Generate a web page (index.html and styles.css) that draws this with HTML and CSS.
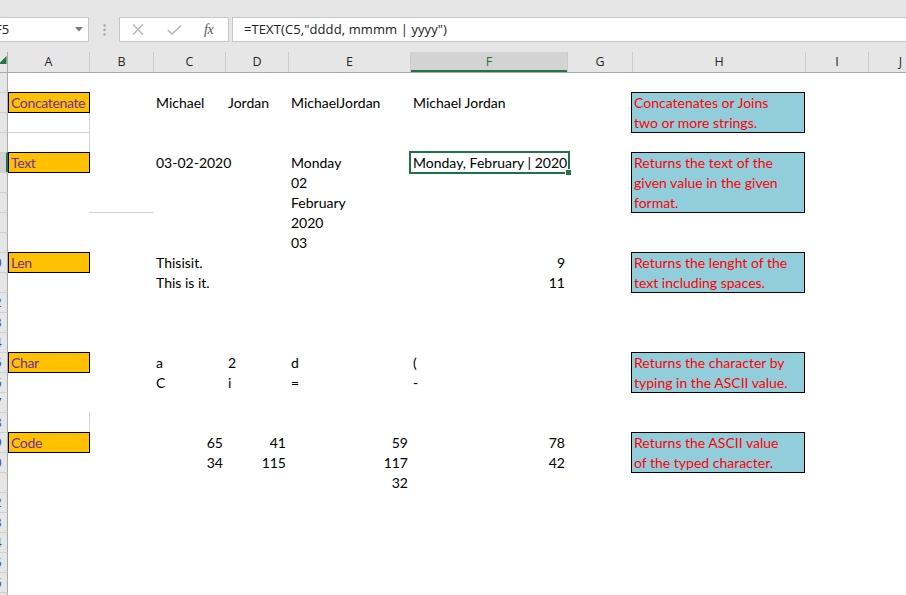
FILE: index.html
```html
<!DOCTYPE html>
<html>
<head>
<meta charset="utf-8">
<link rel="stylesheet" href="styles.css">
</head>
<body>
<div class="topbar">
  <div class="namebox"><span class="namebox-text">F5</span><svg class="dd" width="8" height="5" viewBox="0 0 8 5"><polygon points="0,0 8,0 4,4.5" fill="#7a7a7a"/></svg></div>
  <svg class="grip" width="3" height="12" viewBox="0 0 3 12"><rect x="0.5" y="0.5" width="2" height="2" fill="#9a9a9a"/><rect x="0.5" y="5" width="2" height="2" fill="#9a9a9a"/><rect x="0.5" y="9.5" width="2" height="2" fill="#9a9a9a"/></svg>
  <div class="fxbtns">
    <svg class="ico-x" width="12" height="11" viewBox="0 0 12 11"><path d="M1 0.5 L11 10.5 M11 0.5 L1 10.5" stroke="#b4b4b4" stroke-width="1.3" fill="none"/></svg>
    <svg class="ico-ok" width="15" height="10" viewBox="0 0 15 10"><path d="M0.8 5 L5 9 L14.2 0.6" stroke="#b4b4b4" stroke-width="1.4" fill="none"/></svg>
    <span class="fx">fx</span>
  </div>
  <div class="formula">=TEXT(C5,"dddd, mmmm | yyyy")</div>
</div>

<div class="sheet">
  <div class="corner"><svg width="7" height="20" viewBox="0 0 7 20"><polygon points="6.5,4 6.5,12 -1.5,12" fill="#217346"/></svg></div>
  <div class="ch cA first">A</div>
  <div class="ch cB">B</div>
  <div class="ch cC">C</div>
  <div class="ch cD">D</div>
  <div class="ch cE">E</div>
  <div class="ch cF chsel">F</div>
  <div class="ch cG">G</div>
  <div class="ch cH">H</div>
  <div class="ch cI">I</div>
  <div class="ch cJ">J</div>

  <div class="rh r1"><div class="rn">1</div></div>
  <div class="rh r2"><div class="rn">2</div></div>
  <div class="rh r3"><div class="rn">3</div></div>
  <div class="rh r4"><div class="rn">4</div></div>
  <div class="rh r5 rhsel"><div class="rn">5</div></div>
  <div class="rh r6"><div class="rn">6</div></div>
  <div class="rh r7"><div class="rn">7</div></div>
  <div class="rh r8"><div class="rn">8</div></div>
  <div class="rh r9"><div class="rn">9</div></div>
  <div class="rh r10"><div class="rn">10</div></div>
  <div class="rh r11"><div class="rn">11</div></div>
  <div class="rh r12"><div class="rn">12</div></div>
  <div class="rh r13"><div class="rn">13</div></div>
  <div class="rh r14"><div class="rn">14</div></div>
  <div class="rh r15"><div class="rn">15</div></div>
  <div class="rh r16"><div class="rn">16</div></div>
  <div class="rh r17"><div class="rn">17</div></div>
  <div class="rh r18"><div class="rn">18</div></div>
  <div class="rh r19"><div class="rn">19</div></div>
  <div class="rh r20"><div class="rn">20</div></div>
  <div class="rh r21"><div class="rn">21</div></div>
  <div class="rh r22"><div class="rn">22</div></div>
  <div class="rh r23"><div class="rn">23</div></div>
  <div class="rh r24"><div class="rn">24</div></div>
  <div class="rh r25"><div class="rn">25</div></div>
  <div class="rh r26"><div class="rn">26</div></div>
  <div class="rh r27"><div class="rn">27</div></div>

  <!-- light cell borders -->
  <div class="cA r3 bx-a3"></div>
  <div class="cA r4 bx-a4"></div>
  <div class="cB r8 bx-b8"></div>
  <div class="cA r18 bx-a18"></div>

  <!-- Concatenate -->
  <div class="tag cA r2">Concatenate</div>
  <div class="cell cC r2">Michael</div>
  <div class="cell cD r2">Jordan</div>
  <div class="cell cE r2">MichaelJordan</div>
  <div class="cell cF r2">Michael Jordan</div>
  <div class="desc cH r2 span2">Concatenates or Joins<br>two or more strings.</div>

  <!-- Text -->
  <div class="tag cA r5">Text</div>
  <div class="cell cC r5">03-02-2020</div>
  <div class="cell cE r5">Monday</div>
  <div class="cell cE r6">02</div>
  <div class="cell cE r7">February</div>
  <div class="cell cE r8">2020</div>
  <div class="cell cE r9">03</div>
  <div class="active cF r5">Monday, February | 2020<span class="handle"></span></div>
  <div class="desc cH r5 span3">Returns the text of the<br>given value in the given<br>format.</div>

  <!-- Len -->
  <div class="tag cA r10">Len</div>
  <div class="cell cC r10">Thisisit.</div>
  <div class="cell cC r11">This is it.</div>
  <div class="cell num cF r10">9</div>
  <div class="cell num cF r11">11</div>
  <div class="desc cH r10 span2">Returns the lenght of the<br>text including spaces.</div>

  <!-- Char -->
  <div class="tag cA r15">Char</div>
  <div class="cell cC r15">a</div>
  <div class="cell cD r15">2</div>
  <div class="cell cE r15">d</div>
  <div class="cell cF r15">(</div>
  <div class="cell cC r16">C</div>
  <div class="cell cD r16">i</div>
  <div class="cell cE r16">=</div>
  <div class="cell cF r16">-</div>
  <div class="desc cH r15 span2">Returns the character by<br>typing in the ASCII value.</div>

  <!-- Code -->
  <div class="tag cA r19">Code</div>
  <div class="cell num cC r19">65</div>
  <div class="cell num cD r19">41</div>
  <div class="cell num cE r19">59</div>
  <div class="cell num cF r19">78</div>
  <div class="cell num cC r20">34</div>
  <div class="cell num cD r20">115</div>
  <div class="cell num cE r20">117</div>
  <div class="cell num cF r20">42</div>
  <div class="cell num cE r21">32</div>
  <div class="desc cH r19 span2">Returns the ASCII value<br>of the typed character.</div>
</div>
</body>
</html>
```
FILE: styles.css
```css
html, body {
  margin: 0;
  padding: 0;
  width: 906px;
  height: 595px;
  overflow: hidden;
  background: #ffffff;
}

/* ---------- formula bar ---------- */
.topbar {
  height: 52px;
  box-sizing: border-box;
  padding-top: 17px;
  background: #e6e6e6;
  display: flex;
  align-items: flex-start;
  font-family: "Open Sans", "Noto Sans", sans-serif;
  font-size: 13px;
  color: #222;
}
.namebox {
  margin-left: -10px;
  width: 99px;
  height: 25px;
  box-sizing: border-box;
  border: 1px solid #c6c6c6;
  background: #fff;
  display: flex;
  align-items: center;
  justify-content: space-between;
  padding-left: 4px;
  padding-right: 5px;
  flex: none;
}
.namebox-text { line-height: 23px; }
.dd { display: block; margin-top: -1px; }
.grip {
  display: block;
  flex: none;
  margin-left: 14px;
  margin-top: 7px;
}
.fxbtns {
  flex: none;
  margin-left: 13px;
  width: 110px;
  height: 25px;
  box-sizing: border-box;
  border: 1px solid #c6c6c6;
  background: #fff;
  display: flex;
  align-items: center;
  padding-left: 12px;
}
.ico-x { display: block; }
.ico-ok { display: block; margin-left: 23px; }
.fx {
  margin-left: 22px;
  font-family: "Liberation Serif", serif;
  font-style: italic;
  font-size: 14px;
  color: #555;
  letter-spacing: -0.5px;
}
.formula {
  flex: 1;
  margin-left: 3px;
  margin-right: -2px;
  height: 25px;
  box-sizing: border-box;
  border: 1px solid #c6c6c6;
  background: #fff;
  padding-left: 11px;
  line-height: 23px;
  white-space: nowrap;
  letter-spacing: 0.1px;
}

/* ---------- sheet grid ---------- */
.sheet {
  width: 940px;
  display: grid;
  grid-template-columns: 8px 81px 64px 72px 63px 122px 157px 65px 173px 63px 64px;
  grid-template-rows: repeat(28, 20px);
  font-family: Lato, "Liberation Sans", sans-serif;
  font-size: 14px;
  line-height: 20px;
  color: #000;
}

.corner {
  grid-column: 1;
  grid-row: 1;
  background: #e6e6e6;
  border-right: 1px solid #a9a9a9;
  box-shadow: 0 1px 0 #a9a9a9;
  z-index: 1;
}
.corner svg { display: block; }

.ch {
  grid-row: 1;
  background: #e6e6e6;
  border-left: 1px solid #cbcbcb;
  box-shadow: 0 1px 0 #a9a9a9;
  z-index: 1;
  text-align: center;
  font-family: "Open Sans", "Noto Sans", sans-serif;
  font-size: 12.5px;
  line-height: 20px;
  color: #262626;
}
.ch.first { border-left: none; }
.chsel {
  background: #d3d3d3;
  color: #217346;
  box-shadow: inset 0 -2px 0 #217346, 0 1px 0 #a9a9a9;
}

.rh {
  grid-column: 1;
  background: #e6e6e6;
  border-right: 1px solid #a9a9a9;
  border-top: 1px solid #d0d0d0;
  overflow: hidden;
  font-family: "Open Sans", "Noto Sans", sans-serif;
  font-size: 12.5px;
  line-height: 19px;
  color: #1f4e9a;
}
.rn {
  width: 25px;
  margin-left: -18px;
  text-align: center;
}
.rhsel {
  background: #d3d3d3;
  border-right: 2px solid #217346;
  color: #217346;
}

/* column placement */
.cA { grid-column: 2; }
.cB { grid-column: 3; }
.cC { grid-column: 4; }
.cD { grid-column: 5; }
.cE { grid-column: 6; }
.cF { grid-column: 7; }
.cG { grid-column: 8; }
.cH { grid-column: 9; }
.cI { grid-column: 10; }
.cJ { grid-column: 11; }

/* row placement (sheet row n -> grid row n+1) */
.r1 { grid-row-start: 2; }
.r2 { grid-row-start: 3; }
.r3 { grid-row-start: 4; }
.r4 { grid-row-start: 5; }
.r5 { grid-row-start: 6; }
.r6 { grid-row-start: 7; }
.r7 { grid-row-start: 8; }
.r8 { grid-row-start: 9; }
.r9 { grid-row-start: 10; }
.r10 { grid-row-start: 11; }
.r11 { grid-row-start: 12; }
.r12 { grid-row-start: 13; }
.r13 { grid-row-start: 14; }
.r14 { grid-row-start: 15; }
.r15 { grid-row-start: 16; }
.r16 { grid-row-start: 17; }
.r17 { grid-row-start: 18; }
.r18 { grid-row-start: 19; }
.r19 { grid-row-start: 20; }
.r20 { grid-row-start: 21; }
.r21 { grid-row-start: 22; }
.r22 { grid-row-start: 23; }
.r23 { grid-row-start: 24; }
.r24 { grid-row-start: 25; }
.r25 { grid-row-start: 26; }
.r26 { grid-row-start: 27; }
.r27 { grid-row-start: 28; }
.span2 { grid-row-end: span 2; }
.span3 { grid-row-end: span 3; }

/* light cell borders */
.bx-a3 {
  width: calc(100% + 1px);
  height: 21px;
  box-sizing: border-box;
  border-right: 1px solid #d4d4d4;
  border-bottom: 1px solid #d4d4d4;
  align-self: start;
}
.bx-a4, .bx-a18 {
  width: calc(100% + 1px);
  box-sizing: border-box;
  border-right: 1px solid #d4d4d4;
}
.bx-b8 {
  border-top: 1px solid #d4d4d4;
  width: calc(100% + 1px);
  box-sizing: border-box;
}

.cell {
  padding: 1px 3px 0;
  white-space: nowrap;
}
.num {
  text-align: right;
  padding-right: 2px;
}

.tag {
  align-self: start;
  width: calc(100% + 1px);
  height: 21px;
  box-sizing: border-box;
  background: #ffc000;
  color: #7030a0;
  border: 1px solid #000;
  padding-left: 2px;
  line-height: 20px;
  letter-spacing: -0.35px;
  white-space: nowrap;
  overflow: hidden;
  z-index: 1;
}

.desc {
  align-self: start;
  margin-left: -1px;
  width: calc(100% + 1px);
  box-sizing: border-box;
  background: #92cddc;
  color: #ff0000;
  border: 1px solid #000;
  padding-left: 2px;
  line-height: 20px;
  white-space: nowrap;
}
.desc.span2 { height: 41px; }
.desc.span3 { height: 61px; }

.active {
  position: relative;
  z-index: 2;
  align-self: start;
  margin-left: -1px;
  margin-top: -1px;
  width: 161px;
  height: 23px;
  box-sizing: border-box;
  border: 2px solid #217346;
  padding-left: 2px;
  line-height: 20px;
  white-space: nowrap;
  background: #fff;
}
.handle {
  position: absolute;
  right: -4px;
  bottom: -4px;
  width: 5px;
  height: 5px;
  background: #217346;
  border: 1px solid #fff;
}
```
